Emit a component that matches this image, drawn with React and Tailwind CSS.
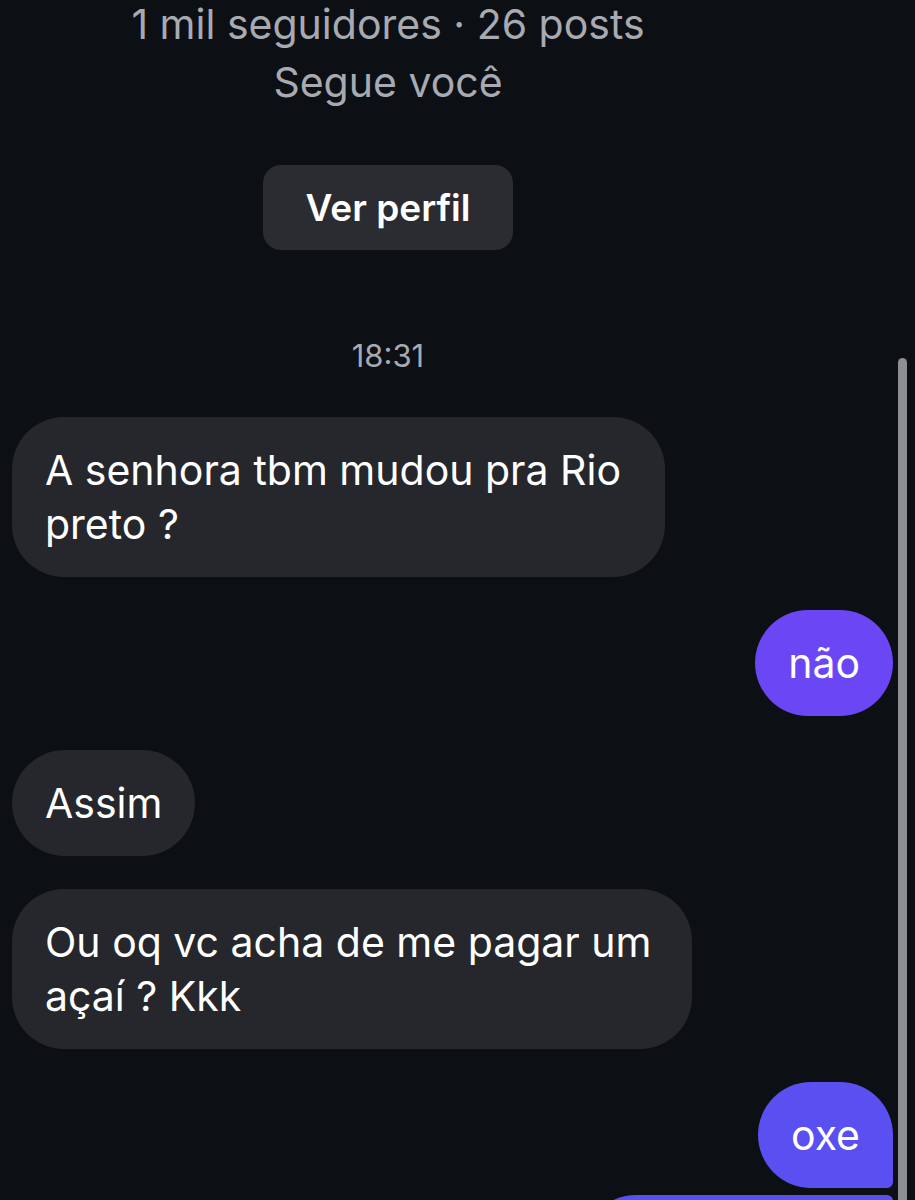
export default function App() {
  return (
    <div
      className="relative w-[915px] h-[1200px] overflow-hidden bg-[#0c0f14] text-white"
      style={{ fontFamily: "Inter, 'Noto Sans', sans-serif" }}
    >
      {/* profile header */}
      <div className="w-[776px] flex flex-col items-center">
        <p className="mt-[-5px] text-[41px] leading-[58px] text-[#a7aab1]">
          1 mil seguidores · 26 posts
        </p>
        <p className="text-[41px] leading-[58px] text-[#a7aab1]">Segue você</p>
        <button className="mt-[54px] w-[250px] h-[85px] rounded-[18px] bg-[#2a2c31] text-[37px] font-semibold text-white">
          Ver perfil
        </button>
        <p className="mt-[86px] text-[31px] leading-[40px] text-[#a7aab1]">18:31</p>
      </div>

      {/* messages */}
      <div className="mt-[41px] flex flex-col text-[41px] leading-[54px]">
        <div className="ml-[12px] w-[653px] rounded-[52px] bg-[#25272c] px-[33px] py-[26px] whitespace-nowrap">
          A senhora tbm mudou pra Rio
          <br />
          preto ?
        </div>
        <div className="mt-[33px] mr-[22px] self-end rounded-full bg-[#6a46f5] px-[33px] py-[26px]">
          não
        </div>
        <div className="mt-[34px] ml-[12px] w-fit rounded-full bg-[#25272c] px-[33px] py-[26px]">
          Assim
        </div>
        <div className="mt-[33px] ml-[12px] w-[680px] rounded-[52px] bg-[#25272c] px-[33px] py-[26px] whitespace-nowrap">
          Ou oq vc acha de me pagar um
          <br />
          açaí ? Kkk
        </div>
        <div className="mt-[33px] mr-[22px] self-end rounded-[53px] rounded-br-[6px] bg-[#5a4ff0] px-[33px] py-[26px]">
          oxe
        </div>
        <div className="mt-[7px] mr-[22px] self-end w-[310px] h-[106px] rounded-[53px] rounded-tr-[6px] bg-[#5a50ee]" />
      </div>

      {/* scrollbar */}
      <div className="absolute left-[898px] top-[358px] w-[9px] h-[900px] rounded-t-full bg-[#8e8e93]" />
    </div>
  );
}
